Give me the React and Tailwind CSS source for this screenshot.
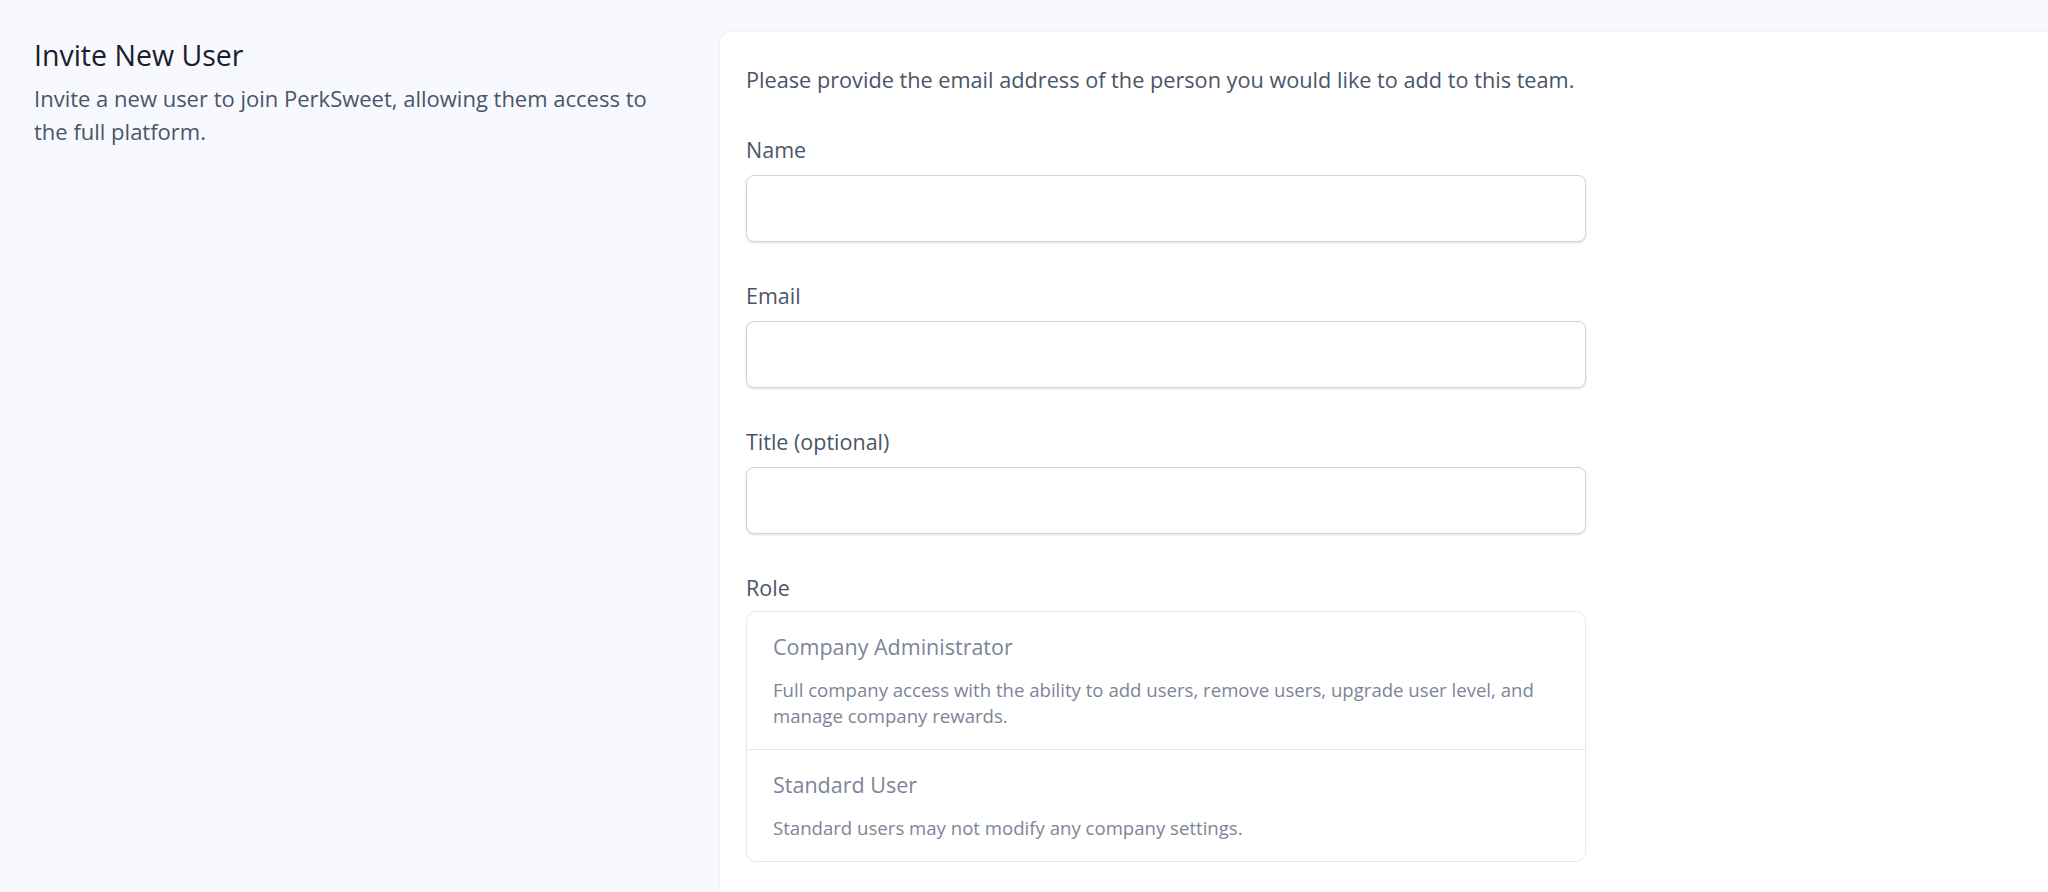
export default function App() {
  const fields = ['Name', 'Email', 'Title (optional)']
  const roles = [
    {
      title: 'Company Administrator',
      desc: 'Full company access with the ability to add users, remove users, upgrade user level, and manage company rewards.',
    },
    { title: 'Standard User', desc: 'Standard users may not modify any company settings.' },
  ]

  return (
    <div className="min-h-screen flex bg-[#f8f9fe] font-['Open_Sans',sans-serif]">
      <div className="w-[720px] shrink-0 pl-[34px] pt-[37px]">
        <h1 className="text-[28.5px] leading-[36px] text-[#1a202c]">Invite New User</h1>
        <p className="mt-[9px] w-[640px] text-[22px] leading-[33px] text-[#4a5568]">
          Invite a new user to join PerkSweet, allowing them access to the full platform.
        </p>
      </div>

      <div className="flex-1 mt-[32px] bg-white rounded-tl-xl shadow-[0_0_3px_rgba(0,0,0,0.06)] pl-[26px] pt-[34px]">
        <p className="text-[21.7px] leading-[28px] text-[#4a5568]">
          Please provide the email address of the person you would like to add to this team.
        </p>

        <div className="w-[840px] mt-[42px] flex flex-col gap-[40px]">
          {fields.map((f) => (
            <div key={f}>
              <label className="block text-[21.5px] leading-[28px] text-[#4a5568]">{f}</label>
              <input
                type="text"
                className="mt-[11px] block w-full h-[67px] rounded-lg border border-[#d2d6dc] bg-white shadow-sm outline-none"
              />
            </div>
          ))}

          <div>
            <label className="block text-[21.5px] leading-[28px] text-[#4a5568]">Role</label>
            <div className="mt-[9px] rounded-[10px] border border-[#e2e8f0] bg-white">
              {roles.map((r, i) => (
                <div
                  key={r.title}
                  className={`px-[26px] pt-[21px] pb-[20px] ${i > 0 ? 'border-t border-[#e2e8f0]' : ''}`}
                >
                  <div className="text-[21.5px] leading-[28px] text-[#7c8597]">{r.title}</div>
                  <div className="mt-[16px] text-[18.6px] leading-[26px] text-[#7c8597]">{r.desc}</div>
                </div>
              ))}
            </div>
          </div>
        </div>
      </div>
    </div>
  )
}
